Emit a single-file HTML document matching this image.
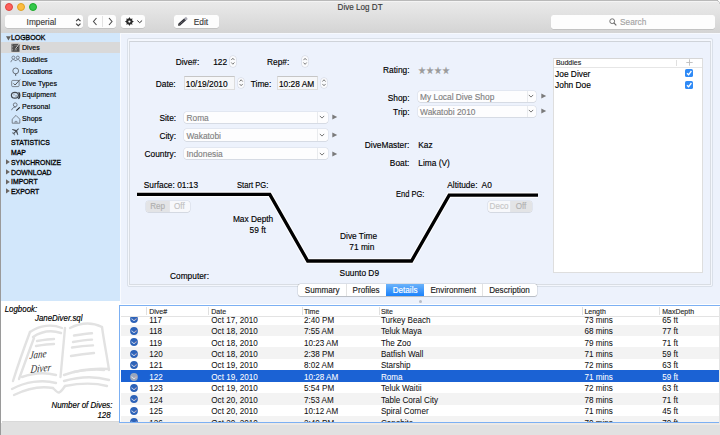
<!DOCTYPE html>
<html><head><meta charset="utf-8"><title>Dive Log DT</title>
<style>
html,body{margin:0;padding:0;width:720px;height:435px;overflow:hidden;background:#fff;}
body{position:relative;font-family:"Liberation Sans", sans-serif;}
div{box-sizing:border-box;-webkit-text-stroke:0.14px currentColor;}
</style></head><body>
<div style="position:absolute;left:0.00px;top:0.00px;width:720.00px;height:33.00px;background:linear-gradient(#ebebeb,#d4d4d4);"></div><div style="position:absolute;left:0.00px;top:0.00px;width:720.00px;height:1.00px;background:#b9b9b9;"></div><div style="position:absolute;left:1.00px;top:1.00px;width:717.00px;height:1.00px;background:#f4f4f4;"></div><div style="position:absolute;left:0.00px;top:0.00px;width:2.00px;height:2.00px;background:#fff;border-radius:0 0 2px 0;box-shadow:inset -0.6px -0.6px 0 #aaa;"></div><div style="position:absolute;left:718.00px;top:0.00px;width:2.00px;height:3.00px;background:#fff;"></div><svg style="position:absolute;left:716px;top:0" width="4" height="4" viewBox="0 0 4 4"><path d="M1 0.5 C2.2 0.7 3.3 1.8 3.6 3.5" fill="none" stroke="#b0b0b0" stroke-width="1"/></svg><div style="position:absolute;left:0.00px;top:32.50px;width:720.00px;height:0.50px;background:#c4c4c4;"></div><div style="position:absolute;left:5.00px;top:3.40px;width:8.00px;height:8.00px;border-radius:50%;background:#fc605c;border:0.5px solid #e0443e;"></div><div style="position:absolute;left:17.00px;top:3.40px;width:8.00px;height:8.00px;border-radius:50%;background:#fdbc40;border:0.5px solid #dea123;"></div><div style="position:absolute;left:29.00px;top:3.40px;width:8.00px;height:8.00px;border-radius:50%;background:#34c84a;border:0.5px solid #1aab29;"></div><div style="position:absolute;left:337.60px;top:4.49px;font-size:8.1px;line-height:8.1px;color:#383838;white-space:nowrap;transform:scale(1.0,1.12);transform-origin:0 6.86px;">Dive Log DT</div><div style="position:absolute;left:5.00px;top:15.00px;width:78.00px;height:13.00px;background:#fdfdfd;border-radius:2.5px;box-shadow:0 0.5px 0.5px rgba(0,0,0,0.18);"></div><div style="position:absolute;left:26.60px;top:18.22px;font-size:8.3px;line-height:8.3px;color:#3c3c3c;white-space:nowrap;transform:scale(1.0,1.12);transform-origin:0 7.03px;">Imperial</div><svg style="position:absolute;left:75px;top:17.5px" width="7" height="9" viewBox="0 0 7 9"><path d="M1.1 3.2 L3.3 1.1 L5.5 3.2 M1.1 5.6 L3.3 7.7 L5.5 5.6" fill="none" stroke="#3c3c3c" stroke-width="1.15"/></svg><div style="position:absolute;left:88.00px;top:15.00px;width:28.30px;height:13.00px;background:#fdfdfd;border-radius:2.5px;box-shadow:0 0.5px 0.5px rgba(0,0,0,0.18);"></div><div style="position:absolute;left:102.00px;top:16.00px;width:0.60px;height:11.00px;background:#e2e2e2;"></div><svg style="position:absolute;left:91px;top:17px" width="24" height="9" viewBox="0 0 24 9"><path d="M5.5 1 L2.5 4.5 L5.5 8" fill="none" stroke="#4a4a4a" stroke-width="1.1"/><path d="M18 1 L21 4.5 L18 8" fill="none" stroke="#4a4a4a" stroke-width="1.1"/></svg><div style="position:absolute;left:121.00px;top:15.00px;width:23.70px;height:13.00px;background:#fdfdfd;border-radius:2.5px;box-shadow:0 0.5px 0.5px rgba(0,0,0,0.18);"></div><svg style="position:absolute;left:124px;top:16px" width="20" height="11" viewBox="0 0 20 11"><path d="M5.40 1.10 L6.43 3.11 L8.58 2.42 L7.89 4.57 L9.90 5.60 L7.89 6.63 L8.58 8.78 L6.43 8.09 L5.40 10.10 L4.37 8.09 L2.22 8.78 L2.91 6.63 L0.90 5.60 L2.91 4.57 L2.22 2.42 L4.37 3.11Z" fill="#2a2a2a"/><circle cx="5.400000000000006" cy="5.60" r="3" fill="#2a2a2a"/><circle cx="5.400000000000006" cy="5.60" r="1.15" fill="#fff"/><path d="M13.3 4.5 L15.7 6.7 L18.1 4.5" fill="none" stroke="#333" stroke-width="1"/></svg><div style="position:absolute;left:174.00px;top:15.00px;width:45.00px;height:13.00px;background:#fdfdfd;border-radius:2.5px;box-shadow:0 0.5px 0.5px rgba(0,0,0,0.18);"></div><svg style="position:absolute;left:170px;top:12px" width="20" height="18" viewBox="0 0 20 18"><path d="M9.3 12.4 L15.2 7.3" stroke="#2e2e35" stroke-width="2.7"/><path d="M15.1 7.4 L16.9 5.9" stroke="#a9a9b4" stroke-width="2.7"/><path d="M9.8 12 L14.8 7.7" stroke="#d0d0d8" stroke-width="0.5" stroke-dasharray="1 0.8"/><path d="M8.2 13.7 L8.4 11.6 L10.3 13.4 Z" fill="#111"/></svg><div style="position:absolute;left:193.75px;top:18.22px;font-size:8.3px;line-height:8.3px;color:#3c3c3c;white-space:nowrap;transform:scale(1.0,1.12);transform-origin:0 7.03px;">Edit</div><div style="position:absolute;left:551.00px;top:15.00px;width:164.00px;height:13.50px;background:#fdfdfd;border-radius:2.5px;box-shadow:0 0.5px 0.5px rgba(0,0,0,0.18);"></div><svg style="position:absolute;left:609px;top:17.5px" width="8" height="8" viewBox="0 0 8 8"><circle cx="3.2" cy="3.2" r="2.4" fill="none" stroke="#6a6a6a" stroke-width="0.95"/><path d="M4.9 4.9 L7.3 7.3" stroke="#6a6a6a" stroke-width="1.2"/></svg><div style="position:absolute;left:620.00px;top:18.22px;font-size:8.3px;line-height:8.3px;color:#a3a3a3;white-space:nowrap;transform:scale(1.0,1.12);transform-origin:0 7.03px;">Search</div><div style="position:absolute;left:0.00px;top:33.00px;width:120.00px;height:268.80px;background:#d2e7fb;"></div><div style="position:absolute;left:0.00px;top:0.00px;width:1.00px;height:435.00px;background:#9a9a9a;"></div><div style="position:absolute;left:1.00px;top:42.20px;width:119.00px;height:11.30px;background:#d9d9d9;"></div><svg style="position:absolute;left:6px;top:35.6px" width="5" height="5" viewBox="0 0 5 5"><path d="M0 0.2H4.9L2.45 4.4Z" fill="#606060"/></svg><div style="position:absolute;left:11.00px;top:34.91px;font-size:6.9px;line-height:6.9px;color:#000;white-space:nowrap;transform:scale(1.0,1.12);transform-origin:0 5.84px;-webkit-text-stroke:0.28px #000;">LOGBOOK</div><div style="position:absolute;left:22.00px;top:44.84px;font-size:7.1px;line-height:7.1px;color:#000;white-space:nowrap;transform:scale(1.0,1.12);transform-origin:0 6.01px;-webkit-text-stroke:0.15px #000;">Dives</div><div style="position:absolute;left:22.00px;top:56.74px;font-size:7.1px;line-height:7.1px;color:#000;white-space:nowrap;transform:scale(1.0,1.12);transform-origin:0 6.01px;-webkit-text-stroke:0.15px #000;">Buddies</div><div style="position:absolute;left:22.00px;top:68.64px;font-size:7.1px;line-height:7.1px;color:#000;white-space:nowrap;transform:scale(1.0,1.12);transform-origin:0 6.01px;-webkit-text-stroke:0.15px #000;">Locations</div><div style="position:absolute;left:22.00px;top:80.54px;font-size:7.1px;line-height:7.1px;color:#000;white-space:nowrap;transform:scale(1.0,1.12);transform-origin:0 6.01px;-webkit-text-stroke:0.15px #000;">Dive Types</div><div style="position:absolute;left:22.00px;top:92.44px;font-size:7.1px;line-height:7.1px;color:#000;white-space:nowrap;transform:scale(1.0,1.12);transform-origin:0 6.01px;-webkit-text-stroke:0.15px #000;">Equipment</div><div style="position:absolute;left:22.00px;top:104.34px;font-size:7.1px;line-height:7.1px;color:#000;white-space:nowrap;transform:scale(1.0,1.12);transform-origin:0 6.01px;-webkit-text-stroke:0.15px #000;">Personal</div><div style="position:absolute;left:22.00px;top:116.24px;font-size:7.1px;line-height:7.1px;color:#000;white-space:nowrap;transform:scale(1.0,1.12);transform-origin:0 6.01px;-webkit-text-stroke:0.15px #000;">Shops</div><div style="position:absolute;left:22.00px;top:128.14px;font-size:7.1px;line-height:7.1px;color:#000;white-space:nowrap;transform:scale(1.0,1.12);transform-origin:0 6.01px;-webkit-text-stroke:0.15px #000;">Trips</div><div style="position:absolute;left:11.00px;top:140.21px;font-size:6.9px;line-height:6.9px;color:#000;white-space:nowrap;transform:scale(1.0,1.12);transform-origin:0 5.84px;-webkit-text-stroke:0.28px #000;">STATISTICS</div><div style="position:absolute;left:11.00px;top:150.11px;font-size:6.9px;line-height:6.9px;color:#000;white-space:nowrap;transform:scale(1.0,1.12);transform-origin:0 5.84px;-webkit-text-stroke:0.28px #000;">MAP</div><div style="position:absolute;left:11.00px;top:159.71px;font-size:6.9px;line-height:6.9px;color:#000;white-space:nowrap;transform:scale(1.0,1.12);transform-origin:0 5.84px;-webkit-text-stroke:0.28px #000;">SYNCHRONIZE</div><div style="position:absolute;left:11.00px;top:169.61px;font-size:6.9px;line-height:6.9px;color:#000;white-space:nowrap;transform:scale(1.0,1.12);transform-origin:0 5.84px;-webkit-text-stroke:0.28px #000;">DOWNLOAD</div><div style="position:absolute;left:11.00px;top:178.81px;font-size:6.9px;line-height:6.9px;color:#000;white-space:nowrap;transform:scale(1.0,1.12);transform-origin:0 5.84px;-webkit-text-stroke:0.28px #000;">IMPORT</div><div style="position:absolute;left:11.00px;top:188.51px;font-size:6.9px;line-height:6.9px;color:#000;white-space:nowrap;transform:scale(1.0,1.12);transform-origin:0 5.84px;-webkit-text-stroke:0.28px #000;">EXPORT</div><svg style="position:absolute;left:6.4px;top:159.4px" width="4" height="6" viewBox="0 0 4 6"><path d="M0 0.3V5.5L3.8 2.9Z" fill="#6b6663"/></svg><svg style="position:absolute;left:6.4px;top:169.3px" width="4" height="6" viewBox="0 0 4 6"><path d="M0 0.3V5.5L3.8 2.9Z" fill="#6b6663"/></svg><svg style="position:absolute;left:6.4px;top:178.5px" width="4" height="6" viewBox="0 0 4 6"><path d="M0 0.3V5.5L3.8 2.9Z" fill="#6b6663"/></svg><svg style="position:absolute;left:6.4px;top:188.2px" width="4" height="6" viewBox="0 0 4 6"><path d="M0 0.3V5.5L3.8 2.9Z" fill="#6b6663"/></svg><svg style="position:absolute;left:0;top:0" width="120" height="140" viewBox="0 0 120 140"><rect x="11.5" y="43.8" width="8" height="8" fill="#4d4d4d"/><path d="M12.6 44.5V51.2" stroke="#cfcfcf" stroke-width="0.7" stroke-dasharray="0.8 0.7"/><path d="M14.2 45.3H17.5M14.2 50.2H17" stroke="#9a9a9a" stroke-width="0.5"/><path d="M19.8 43.8 L15.6 49.6" stroke="#e8e8e8" stroke-width="1.5"/><path d="M19.6 44.6 L16 49.6" stroke="#111" stroke-width="0.9"/><g fill="none" stroke="#5f6670" stroke-width="0.75"><circle cx="13.4" cy="57.6" r="1.5"/><circle cx="17.8" cy="57.6" r="1.5"/><path d="M10.9 62.2 C11.2 60.2 12.2 59.6 13.4 59.6 C14.6 59.6 15.4 60.2 15.7 61"/><path d="M15.5 61 C15.8 60.2 16.6 59.6 17.8 59.6 C19 59.6 20 60.2 20.3 62.2"/></g><circle cx="15.7" cy="70.9" r="2.9" fill="none" stroke="#5d636b" stroke-width="0.9"/><path d="M15.7 73.8 V75.8" stroke="#4d535b" stroke-width="1"/><rect x="11.7" y="80.4" width="7.4" height="6.2" rx="1" fill="none" stroke="#6d737b" stroke-width="0.85"/><path d="M13.5 83.4 L15.1 85 L20 79.6" fill="none" stroke="#444" stroke-width="0.9"/><ellipse cx="14.9" cy="95.3" rx="3.5" ry="2.9" fill="none" stroke="#43484f" stroke-width="1.2"/><circle cx="13.9" cy="94.6" r="1.1" fill="#b8bec6"/><circle cx="16.1" cy="95.9" r="0.9" fill="#9aa0a8"/><path d="M18.6 92.3 C20.3 93.6 20.2 97 18.4 98.9" fill="none" stroke="#33373d" stroke-width="1.3"/><g fill="none" stroke="#5a6068" stroke-width="0.8"><circle cx="15.2" cy="104.8" r="1.9"/><path d="M11.6 110.2 C12.2 107.7 14 107.2 15.6 107.3"/></g><path d="M16.3 110.6 L19.8 107.4" stroke="#222" stroke-width="1.2"/><path d="M12.2 119.2 L16 115.4 L19.8 119.2 V123.2 H12.2 Z" fill="none" stroke="#6a7078" stroke-width="0.85" stroke-linejoin="round"/><path d="M15 123 V121.4 H17 V123" fill="none" stroke="#6a7078" stroke-width="0.7"/><g transform="translate(16 131.3) rotate(45) translate(-4.2 -4.2) scale(0.84)"><path d="M4.4 0.3 C4.8 0.3 5.6 0.3 5.6 1.4 V3.6 L9.8 6 V7 L5.6 5.6 V8.2 L7 9.2 V9.9 L5 9.3 L3 9.9 V9.2 L4.4 8.2 V5.6 L0.2 7 V6 L4.4 3.6 V1.4 C4.4 0.3 4.4 0.3 4.4 0.3Z" fill="#474c53"/></g></svg><div style="position:absolute;left:120.00px;top:33.00px;width:600.00px;height:271.00px;background:#edf2fc;"></div><div style="position:absolute;left:120.00px;top:33.00px;width:1.20px;height:271.00px;background:#f9fbff;"></div><div style="position:absolute;left:120.00px;top:33.00px;width:600.00px;height:1.00px;background:#f6f9fe;"></div><div style="position:absolute;left:126.80px;top:38.20px;width:586.60px;height:249.00px;border:1px solid #dae0e9;border-radius:2px;background:#f4f7fd;"></div><div style="position:absolute;left:128.80px;top:40.80px;width:582.40px;height:244.40px;border:1px solid #d9dde3;border-top-color:#cfd3d9;background:#edf2fc;"></div><div style="position:absolute;right:520.70px;top:57.98px;font-size:8.35px;line-height:8.35px;color:#000;white-space:nowrap;transform:scale(1.0,1.12);transform-origin:100% 7.07px;">Dive#:</div><div style="position:absolute;left:213.20px;top:57.98px;font-size:8.35px;line-height:8.35px;color:#000;white-space:nowrap;transform:scale(1.0,1.12);transform-origin:0 7.07px;">122</div><div style="position:absolute;left:229.90px;top:56.30px;width:5.70px;height:10.50px;background:#fafbfd;border-radius:3px;box-shadow:0 0 0 0.5px rgba(0,0,0,0.12);"></div><svg style="position:absolute;left:229.90px;top:56.30px" width="5.70" height="10.50" viewBox="0 0 5.70 10.50"><path d="M1.25 4.05 L2.85 2.25 L4.45 4.05 M1.25 6.45 L2.85 8.25 L4.45 6.45" fill="none" stroke="#6e6e6e" stroke-width="0.9"/></svg><div style="position:absolute;right:430.70px;top:57.98px;font-size:8.35px;line-height:8.35px;color:#000;white-space:nowrap;transform:scale(1.0,1.12);transform-origin:100% 7.07px;">Rep#:</div><div style="position:absolute;left:301.60px;top:56.30px;width:6.20px;height:10.70px;background:#fafbfd;border-radius:3px;box-shadow:0 0 0 0.5px rgba(0,0,0,0.12);"></div><svg style="position:absolute;left:301.60px;top:56.30px" width="6.20" height="10.70" viewBox="0 0 6.20 10.70"><path d="M1.50 4.15 L3.10 2.35 L4.70 4.15 M1.50 6.55 L3.10 8.35 L4.70 6.55" fill="none" stroke="#6e6e6e" stroke-width="0.9"/></svg><div style="position:absolute;right:544.30px;top:79.78px;font-size:8.35px;line-height:8.35px;color:#000;white-space:nowrap;transform:scale(1.0,1.12);transform-origin:100% 7.07px;">Date:</div><div style="position:absolute;left:184.00px;top:76.10px;width:50.70px;height:14.20px;background:#f6f7f9;border:1px solid #dddddd;border-top-color:#c6c6c6;"></div><div style="position:absolute;left:185.80px;top:79.78px;font-size:8.35px;line-height:8.35px;color:#000;white-space:nowrap;transform:scale(1.0,1.12);transform-origin:0 7.07px;">10/19/2010</div><div style="position:absolute;left:237.50px;top:78.40px;width:6.30px;height:9.50px;background:#fafbfd;border-radius:3px;box-shadow:0 0 0 0.5px rgba(0,0,0,0.12);"></div><svg style="position:absolute;left:237.50px;top:78.40px" width="6.30" height="9.50" viewBox="0 0 6.30 9.50"><path d="M1.55 3.55 L3.15 1.75 L4.75 3.55 M1.55 5.95 L3.15 7.75 L4.75 5.95" fill="none" stroke="#6e6e6e" stroke-width="0.9"/></svg><div style="position:absolute;right:448.70px;top:79.78px;font-size:8.35px;line-height:8.35px;color:#000;white-space:nowrap;transform:scale(1.0,1.12);transform-origin:100% 7.07px;">Time:</div><div style="position:absolute;left:276.80px;top:76.10px;width:41.00px;height:14.20px;background:#f6f7f9;border:1px solid #dddddd;border-top-color:#c6c6c6;"></div><div style="position:absolute;left:278.90px;top:79.78px;font-size:8.35px;line-height:8.35px;color:#000;white-space:nowrap;transform:scale(1.0,1.12);transform-origin:0 7.07px;">10:28 AM</div><div style="position:absolute;left:321.20px;top:78.40px;width:6.00px;height:9.50px;background:#fafbfd;border-radius:3px;box-shadow:0 0 0 0.5px rgba(0,0,0,0.12);"></div><svg style="position:absolute;left:321.20px;top:78.40px" width="6.00" height="9.50" viewBox="0 0 6.00 9.50"><path d="M1.40 3.55 L3.00 1.75 L4.60 3.55 M1.40 5.95 L3.00 7.75 L4.60 5.95" fill="none" stroke="#6e6e6e" stroke-width="0.9"/></svg><div style="position:absolute;right:543.90px;top:113.98px;font-size:8.35px;line-height:8.35px;color:#000;white-space:nowrap;transform:scale(1.0,1.12);transform-origin:100% 7.07px;">Site:</div><div style="position:absolute;right:543.90px;top:132.13px;font-size:8.35px;line-height:8.35px;color:#000;white-space:nowrap;transform:scale(1.0,1.12);transform-origin:100% 7.07px;">City:</div><div style="position:absolute;right:543.90px;top:149.78px;font-size:8.35px;line-height:8.35px;color:#000;white-space:nowrap;transform:scale(1.0,1.12);transform-origin:100% 7.07px;">Country:</div><div style="position:absolute;left:184.20px;top:111.50px;width:143.40px;height:11.50px;background:#fdfdfe;border-radius:2.5px;box-shadow:0 0 0 0.5px rgba(0,0,0,0.09),0 0.6px 0.6px rgba(0,0,0,0.10);"></div><div style="position:absolute;left:317.20px;top:111.50px;width:0.60px;height:11.50px;background:#e9ebee;"></div><svg style="position:absolute;left:319.40px;top:115.25px" width="6" height="4" viewBox="0 0 6 4"><path d="M0.8 0.9 L3 3.1 L5.2 0.9" fill="none" stroke="#6f6f6f" stroke-width="0.95"/></svg><div style="position:absolute;left:186.50px;top:113.78px;font-size:8.35px;line-height:8.35px;color:#828282;white-space:nowrap;transform:scale(1.0,1.12);transform-origin:0 7.07px;">Roma</div><svg style="position:absolute;left:332.00px;top:114.25px" width="6" height="6" viewBox="0 0 6 6"><path d="M0.3 0.5 L5.2 3 L0.3 5.5Z" fill="#7a7a7a"/></svg><div style="position:absolute;left:184.20px;top:129.30px;width:143.40px;height:11.50px;background:#fdfdfe;border-radius:2.5px;box-shadow:0 0 0 0.5px rgba(0,0,0,0.09),0 0.6px 0.6px rgba(0,0,0,0.10);"></div><div style="position:absolute;left:317.20px;top:129.30px;width:0.60px;height:11.50px;background:#e9ebee;"></div><svg style="position:absolute;left:319.40px;top:133.05px" width="6" height="4" viewBox="0 0 6 4"><path d="M0.8 0.9 L3 3.1 L5.2 0.9" fill="none" stroke="#6f6f6f" stroke-width="0.95"/></svg><div style="position:absolute;left:186.50px;top:131.58px;font-size:8.35px;line-height:8.35px;color:#828282;white-space:nowrap;transform:scale(1.0,1.12);transform-origin:0 7.07px;">Wakatobi</div><svg style="position:absolute;left:332.00px;top:132.05px" width="6" height="6" viewBox="0 0 6 6"><path d="M0.3 0.5 L5.2 3 L0.3 5.5Z" fill="#7a7a7a"/></svg><div style="position:absolute;left:184.20px;top:147.80px;width:143.40px;height:11.50px;background:#fdfdfe;border-radius:2.5px;box-shadow:0 0 0 0.5px rgba(0,0,0,0.09),0 0.6px 0.6px rgba(0,0,0,0.10);"></div><div style="position:absolute;left:317.20px;top:147.80px;width:0.60px;height:11.50px;background:#e9ebee;"></div><svg style="position:absolute;left:319.40px;top:151.55px" width="6" height="4" viewBox="0 0 6 4"><path d="M0.8 0.9 L3 3.1 L5.2 0.9" fill="none" stroke="#6f6f6f" stroke-width="0.95"/></svg><div style="position:absolute;left:186.50px;top:150.08px;font-size:8.35px;line-height:8.35px;color:#828282;white-space:nowrap;transform:scale(1.0,1.12);transform-origin:0 7.07px;">Indonesia</div><svg style="position:absolute;left:332.00px;top:150.55px" width="6" height="6" viewBox="0 0 6 6"><path d="M0.3 0.5 L5.2 3 L0.3 5.5Z" fill="#7a7a7a"/></svg><div style="position:absolute;right:310.50px;top:66.38px;font-size:8.35px;line-height:8.35px;color:#000;white-space:nowrap;transform:scale(1.0,1.12);transform-origin:100% 7.07px;">Rating:</div><div style="position:absolute;left:418.30px;top:67.11px;font-size:8.9px;line-height:8.9px;color:#9b9b9b;white-space:nowrap;transform:scale(1.0,1.12);transform-origin:0 7.54px;letter-spacing:-0.1px;">&#9733;&#9733;&#9733;&#9733;</div><div style="position:absolute;right:310.50px;top:93.78px;font-size:8.35px;line-height:8.35px;color:#000;white-space:nowrap;transform:scale(1.0,1.12);transform-origin:100% 7.07px;">Shop:</div><div style="position:absolute;right:310.50px;top:107.98px;font-size:8.35px;line-height:8.35px;color:#000;white-space:nowrap;transform:scale(1.0,1.12);transform-origin:100% 7.07px;">Trip:</div><div style="position:absolute;left:417.80px;top:90.80px;width:118.20px;height:11.30px;background:#fdfdfe;border-radius:2.5px;box-shadow:0 0 0 0.5px rgba(0,0,0,0.09),0 0.6px 0.6px rgba(0,0,0,0.10);"></div><div style="position:absolute;left:526.50px;top:90.80px;width:0.60px;height:11.30px;background:#e9ebee;"></div><svg style="position:absolute;left:528.25px;top:94.45px" width="6" height="4" viewBox="0 0 6 4"><path d="M0.8 0.9 L3 3.1 L5.2 0.9" fill="none" stroke="#6f6f6f" stroke-width="0.95"/></svg><div style="position:absolute;left:420.10px;top:93.08px;font-size:8.35px;line-height:8.35px;color:#828282;white-space:nowrap;transform:scale(1.0,1.12);transform-origin:0 7.07px;">My Local Dive Shop</div><svg style="position:absolute;left:541.00px;top:93.45px" width="6" height="6" viewBox="0 0 6 6"><path d="M0.3 0.5 L5.2 3 L0.3 5.5Z" fill="#7a7a7a"/></svg><div style="position:absolute;left:417.80px;top:105.60px;width:118.20px;height:11.40px;background:#fdfdfe;border-radius:2.5px;box-shadow:0 0 0 0.5px rgba(0,0,0,0.09),0 0.6px 0.6px rgba(0,0,0,0.10);"></div><div style="position:absolute;left:526.50px;top:105.60px;width:0.60px;height:11.40px;background:#e9ebee;"></div><svg style="position:absolute;left:528.25px;top:109.30px" width="6" height="4" viewBox="0 0 6 4"><path d="M0.8 0.9 L3 3.1 L5.2 0.9" fill="none" stroke="#6f6f6f" stroke-width="0.95"/></svg><div style="position:absolute;left:420.10px;top:107.88px;font-size:8.35px;line-height:8.35px;color:#828282;white-space:nowrap;transform:scale(1.0,1.12);transform-origin:0 7.07px;">Wakatobi 2010</div><svg style="position:absolute;left:541.00px;top:108.30px" width="6" height="6" viewBox="0 0 6 6"><path d="M0.3 0.5 L5.2 3 L0.3 5.5Z" fill="#7a7a7a"/></svg><div style="position:absolute;right:310.70px;top:141.18px;font-size:8.35px;line-height:8.35px;color:#000;white-space:nowrap;transform:scale(1.0,1.12);transform-origin:100% 7.07px;">DiveMaster:</div><div style="position:absolute;left:418.30px;top:140.98px;font-size:8.35px;line-height:8.35px;color:#000;white-space:nowrap;transform:scale(1.0,1.12);transform-origin:0 7.07px;">Kaz</div><div style="position:absolute;right:310.70px;top:159.18px;font-size:8.35px;line-height:8.35px;color:#000;white-space:nowrap;transform:scale(1.0,1.12);transform-origin:100% 7.07px;">Boat:</div><div style="position:absolute;left:418.30px;top:159.18px;font-size:8.35px;line-height:8.35px;color:#000;white-space:nowrap;transform:scale(1.0,1.12);transform-origin:0 7.07px;">Lima (V)</div><div style="position:absolute;left:552.50px;top:57.50px;width:150.00px;height:215.00px;background:#fff;border:1px solid #dedede;border-top-color:#d6d6d6;"></div><div style="position:absolute;left:553.50px;top:66.60px;width:148.00px;height:0.80px;background:#e6e6e6;"></div><div style="position:absolute;left:675.50px;top:59.50px;width:0.60px;height:6.00px;background:#e0e0e0;"></div><div style="position:absolute;left:555.90px;top:59.22px;font-size:7px;line-height:7px;color:#2a2a2a;white-space:nowrap;transform:scale(1.0,1.12);transform-origin:0 5.93px;">Buddies</div><svg style="position:absolute;left:685.5px;top:58.5px" width="7" height="7" viewBox="0 0 7 7"><path d="M3.5 0.3V6.7M0.3 3.5H6.7" stroke="#bdbdbd" stroke-width="0.9"/></svg><div style="position:absolute;left:555.10px;top:69.78px;font-size:8.35px;line-height:8.35px;color:#000;white-space:nowrap;transform:scale(1.0,1.12);transform-origin:0 7.07px;">Joe Diver</div><div style="position:absolute;left:555.10px;top:81.08px;font-size:8.35px;line-height:8.35px;color:#000;white-space:nowrap;transform:scale(1.0,1.12);transform-origin:0 7.07px;">John Doe</div><div style="position:absolute;left:684.70px;top:69.30px;width:8.30px;height:8.00px;background:#2f8af6;border-radius:1.6px;"></div><svg style="position:absolute;left:684.7px;top:69.3px" width="8.3" height="8" viewBox="0 0 8.3 8"><path d="M2 4.2 L3.6 5.8 L6.4 2" fill="none" stroke="#fff" stroke-width="1.3"/></svg><div style="position:absolute;left:684.70px;top:80.50px;width:8.30px;height:8.00px;background:#2f8af6;border-radius:1.6px;"></div><svg style="position:absolute;left:684.7px;top:80.5px" width="8.3" height="8" viewBox="0 0 8.3 8"><path d="M2 4.2 L3.6 5.8 L6.4 2" fill="none" stroke="#fff" stroke-width="1.3"/></svg><svg style="position:absolute;left:0;top:0" width="720" height="435" viewBox="0 0 720 435"><path d="M137 194.4 L269.8 194.4 L307.7 261 L411.5 261 L449.2 195.1 L538 195.1" fill="none" stroke="#fff" stroke-opacity="0.85" stroke-width="5.6" stroke-linejoin="miter"/><path d="M137 194.4 L269.8 194.4 L307.7 261 L411.5 261 L449.2 195.1 L538 195.1" fill="none" stroke="#000" stroke-width="3.3" stroke-linejoin="miter"/></svg><div style="position:absolute;left:143.75px;top:180.88px;font-size:8.35px;line-height:8.35px;color:#000;white-space:nowrap;transform:scale(1.0,1.12);transform-origin:0 7.07px;">Surface: 01:13</div><div style="position:absolute;left:237.10px;top:180.88px;font-size:8.35px;line-height:8.35px;color:#000;white-space:nowrap;transform:scale(0.915,1.12);transform-origin:0 7.07px;">Start PG:</div><div style="position:absolute;left:232.90px;top:215.18px;font-size:8.35px;line-height:8.35px;color:#000;white-space:nowrap;transform:scale(1.0,1.12);transform-origin:0 7.07px;">Max Depth</div><div style="position:absolute;left:249.60px;top:226.08px;font-size:8.35px;line-height:8.35px;color:#000;white-space:nowrap;transform:scale(1.0,1.12);transform-origin:0 7.07px;">59 ft</div><div style="position:absolute;left:340.00px;top:231.78px;font-size:8.35px;line-height:8.35px;color:#000;white-space:nowrap;transform:scale(1.0,1.12);transform-origin:0 7.07px;">Dive Time</div><div style="position:absolute;left:349.30px;top:243.38px;font-size:8.35px;line-height:8.35px;color:#000;white-space:nowrap;transform:scale(1.0,1.12);transform-origin:0 7.07px;">71 min</div><div style="position:absolute;left:339.60px;top:268.98px;font-size:8.35px;line-height:8.35px;color:#000;white-space:nowrap;transform:scale(1.0,1.12);transform-origin:0 7.07px;">Suunto D9</div><div style="position:absolute;left:395.80px;top:189.88px;font-size:8.35px;line-height:8.35px;color:#000;white-space:nowrap;transform:scale(0.9,1.12);transform-origin:0 7.07px;">End PG:</div><div style="position:absolute;left:447.30px;top:181.08px;font-size:8.35px;line-height:8.35px;color:#000;white-space:nowrap;transform:scale(1.0,1.12);transform-origin:0 7.07px;">Altitude:&nbsp; A0</div><div style="position:absolute;left:170.00px;top:272.08px;font-size:8.35px;line-height:8.35px;color:#000;white-space:nowrap;transform:scale(1.0,1.12);transform-origin:0 7.07px;">Computer:</div><div style="position:absolute;left:146.40px;top:200.70px;width:43.50px;height:11.60px;background:#f7f8fb;border-radius:2.5px;box-shadow:0 0 0 0.5px rgba(0,0,0,0.10),0 0.5px 0.5px rgba(0,0,0,0.10);"></div><div style="position:absolute;left:146.40px;top:200.70px;width:22.40px;height:11.60px;background:#e3e4e6;border-radius:2.5px 0 0 2.5px;"></div><div style="position:absolute;left:168.80px;top:200.70px;width:0.50px;height:11.60px;background:#e4e6ea;"></div><div style="position:absolute;left:157.60px;top:203.29px;font-size:8.1px;line-height:8.1px;color:#b0b0b0;white-space:nowrap;transform:translateX(-50%) scale(1.0,1.12);transform-origin:50% 6.86px;">Rep</div><div style="position:absolute;left:179.35px;top:203.29px;font-size:8.1px;line-height:8.1px;color:#c2c2c2;white-space:nowrap;transform:translateX(-50%) scale(1.0,1.12);transform-origin:50% 6.86px;">Off</div><div style="position:absolute;left:488.00px;top:200.50px;width:44.00px;height:11.70px;background:#f7f8fb;border-radius:2.5px;box-shadow:0 0 0 0.5px rgba(0,0,0,0.10),0 0.5px 0.5px rgba(0,0,0,0.10);"></div><div style="position:absolute;left:510.00px;top:200.50px;width:22.00px;height:11.70px;background:#e3e4e6;border-radius:0 2.5px 2.5px 0;"></div><div style="position:absolute;left:510.00px;top:200.50px;width:0.50px;height:11.70px;background:#e4e6ea;"></div><div style="position:absolute;left:499.00px;top:203.09px;font-size:8.1px;line-height:8.1px;color:#c6c6c6;white-space:nowrap;transform:translateX(-50%) scale(1.0,1.12);transform-origin:50% 6.86px;">Deco</div><div style="position:absolute;left:521.00px;top:203.09px;font-size:8.1px;line-height:8.1px;color:#b2b2b2;white-space:nowrap;transform:translateX(-50%) scale(1.0,1.12);transform-origin:50% 6.86px;">Off</div><div style="position:absolute;left:298.00px;top:284.20px;width:239.00px;height:11.80px;background:#fff;border-radius:2.5px;box-shadow:0 0 0 0.5px rgba(0,0,0,0.14),0 0.7px 0.7px rgba(0,0,0,0.16);"></div><div style="position:absolute;left:385.90px;top:284.20px;width:38.50px;height:11.80px;background:linear-gradient(#6cb3fa,#1a82fb);"></div><div style="position:absolute;left:346.30px;top:284.20px;width:0.60px;height:11.80px;background:#e2e2e2;"></div><div style="position:absolute;left:482.00px;top:284.20px;width:0.60px;height:11.80px;background:#e2e2e2;"></div><div style="position:absolute;left:322.15px;top:286.79px;font-size:8.1px;line-height:8.1px;color:#222;white-space:nowrap;transform:translateX(-50%) scale(1.0,1.12);transform-origin:50% 6.86px;">Summary</div><div style="position:absolute;left:366.10px;top:286.79px;font-size:8.1px;line-height:8.1px;color:#222;white-space:nowrap;transform:translateX(-50%) scale(1.0,1.12);transform-origin:50% 6.86px;">Profiles</div><div style="position:absolute;left:405.15px;top:286.79px;font-size:8.1px;line-height:8.1px;color:#fff;white-space:nowrap;transform:translateX(-50%) scale(1.0,1.12);transform-origin:50% 6.86px;">Details</div><div style="position:absolute;left:453.20px;top:286.79px;font-size:8.1px;line-height:8.1px;color:#222;white-space:nowrap;transform:translateX(-50%) scale(1.0,1.12);transform-origin:50% 6.86px;">Environment</div><div style="position:absolute;left:509.50px;top:286.79px;font-size:8.1px;line-height:8.1px;color:#222;white-space:nowrap;transform:translateX(-50%) scale(1.0,1.12);transform-origin:50% 6.86px;">Description</div><div style="position:absolute;left:418.50px;top:299.80px;width:3.00px;height:3.00px;border-radius:50%;background:#b7bcc6;"></div><div style="position:absolute;left:1.00px;top:301.00px;width:119.00px;height:122.40px;background:#fff;"></div><div style="position:absolute;left:4.70px;top:306.46px;font-size:7.9px;line-height:7.9px;color:#000;white-space:nowrap;font-style:italic;transform:scale(1.0,1.12);transform-origin:0 6.69px;-webkit-text-stroke:0.15px #000;">Logbook:</div><div style="position:absolute;left:35.00px;top:315.06px;font-size:7.9px;line-height:7.9px;color:#000;white-space:nowrap;font-style:italic;transform:scale(1.0,1.12);transform-origin:0 6.69px;-webkit-text-stroke:0.15px #000;">JaneDiver.sql</div><svg style="position:absolute;left:0;top:0" width="120" height="435" viewBox="0 0 120 435"><g fill="none" stroke="#e2e2e2" stroke-width="2.4" stroke-linecap="round" stroke-linejoin="round">
<path d="M30 332 C40 325 52 324 62 328"/>
<path d="M33 337 C42 331 52 330 61 333"/>
<path d="M30 332 C24 348 18 365 13 381"/>
<path d="M34 338 C28 354 23 368 19 379"/>
<path d="M65 328 L60.5 377"/>
<path d="M70 328 C80 323 92 322 102 327"/>
<path d="M102 327 C104 342 107 356 109 370"/>
<path d="M37 341 C43 340 49 339 54 339"/>
<path d="M36 346 C42 345 48 344 54 344"/>
<path d="M74 335.5 C80 334.5 86 333.5 92 333.2"/>
<path d="M73 342 C79 341 86 340 92 339.6"/>
<path d="M72 347.5 C79 346.5 86 345.8 93 345.4"/>
<path d="M71 356 C79 354.5 87 353.5 94 353"/>
<path d="M22 377 C33 373 45 372 56 375"/>
<path d="M12 389 C25 382 42 379 56 383"/>
<path d="M14 395 C28 388 42 386 53 388"/>
<path d="M53 388 C56 391 57.5 393 59 392.5 C61 392 63 389 65 386"/>
<path d="M64 375 C78 370 95 368 109 369"/>
<path d="M64 381 C78 377 95 376 109 380"/>
<path d="M65 386 C80 383 96 383 107 386"/>
<path d="M74 372 C85 370 96 369 104 370"/>
</g></svg><div style="position:absolute;left:28.80px;top:349.74px;font-size:11px;line-height:11px;color:#2b2b2b;white-space:nowrap;font-style:italic;font-family:'Liberation Serif', serif;-webkit-text-stroke:0;transform:rotate(-6deg) skewX(-12deg) scaleX(0.82);transform-origin:0 100%;">Jane</div><div style="position:absolute;left:29.80px;top:363.54px;font-size:11px;line-height:11px;color:#2b2b2b;white-space:nowrap;font-style:italic;font-family:'Liberation Serif', serif;-webkit-text-stroke:0;transform:rotate(-6deg) skewX(-12deg) scaleX(0.82);transform-origin:0 100%;">Diver</div><div style="position:absolute;right:607.60px;top:401.76px;font-size:7.9px;line-height:7.9px;color:#000;white-space:nowrap;font-style:italic;transform:scale(1.0,1.12);transform-origin:100% 6.69px;-webkit-text-stroke:0.15px #000;">Number of Dives:</div><div style="position:absolute;right:609.40px;top:412.16px;font-size:7.9px;line-height:7.9px;color:#000;white-space:nowrap;font-style:italic;transform:scale(1.0,1.12);transform-origin:100% 6.69px;-webkit-text-stroke:0.15px #000;">128</div><div style="position:absolute;left:120.00px;top:304.50px;width:600.00px;height:118.90px;background:#fff;"></div><div style="position:absolute;left:121px;top:306px;width:598px;height:116.5px;overflow:hidden;"><div style="position:absolute;left:0;top:7.20px;width:598px;height:11.5px;background:#fff;"></div><div style="position:absolute;left:28.20px;top:10.64px;font-size:8.1px;line-height:8.1px;color:#111;white-space:nowrap;-webkit-text-stroke:0.05px #111;transform:scaleY(1.12);transform-origin:0 6.86px;">117</div><div style="position:absolute;left:90.30px;top:10.64px;font-size:8.1px;line-height:8.1px;color:#111;white-space:nowrap;-webkit-text-stroke:0.05px #111;transform:scaleY(1.12);transform-origin:0 6.86px;">Oct 17, 2010</div><div style="position:absolute;left:183.00px;top:10.64px;font-size:8.1px;line-height:8.1px;color:#111;white-space:nowrap;-webkit-text-stroke:0.05px #111;transform:scaleY(1.12);transform-origin:0 6.86px;">2:40 PM</div><div style="position:absolute;left:259.90px;top:10.64px;font-size:8.1px;line-height:8.1px;color:#111;white-space:nowrap;-webkit-text-stroke:0.05px #111;transform:scaleY(1.12);transform-origin:0 6.86px;">Turkey Beach</div><div style="position:absolute;left:463.40px;top:10.64px;font-size:8.1px;line-height:8.1px;color:#111;white-space:nowrap;-webkit-text-stroke:0.05px #111;transform:scaleY(1.12);transform-origin:0 6.86px;">73 mins</div><div style="position:absolute;left:541.20px;top:10.64px;font-size:8.1px;line-height:8.1px;color:#111;white-space:nowrap;-webkit-text-stroke:0.05px #111;transform:scaleY(1.12);transform-origin:0 6.86px;">65 ft</div><svg style="position:absolute;left:9.20px;top:9.40px" width="8" height="8" viewBox="0 0 8 8"><circle cx="4" cy="4" r="3.9" fill="#2c62b8"/><path d="M1.8 3.6 C2.6 6 5.4 6 6.2 3.6" fill="none" stroke="#fff" stroke-width="0.9"/><path d="M5.3 4.6 L6.3 3.6" stroke="#d06060" stroke-width="0.7"/></svg><div style="position:absolute;left:0;top:18.63px;width:598px;height:11.5px;background:#f3f3f3;"></div><div style="position:absolute;left:28.20px;top:22.07px;font-size:8.1px;line-height:8.1px;color:#111;white-space:nowrap;-webkit-text-stroke:0.05px #111;transform:scaleY(1.12);transform-origin:0 6.86px;">118</div><div style="position:absolute;left:90.30px;top:22.07px;font-size:8.1px;line-height:8.1px;color:#111;white-space:nowrap;-webkit-text-stroke:0.05px #111;transform:scaleY(1.12);transform-origin:0 6.86px;">Oct 18, 2010</div><div style="position:absolute;left:183.00px;top:22.07px;font-size:8.1px;line-height:8.1px;color:#111;white-space:nowrap;-webkit-text-stroke:0.05px #111;transform:scaleY(1.12);transform-origin:0 6.86px;">7:55 AM</div><div style="position:absolute;left:259.90px;top:22.07px;font-size:8.1px;line-height:8.1px;color:#111;white-space:nowrap;-webkit-text-stroke:0.05px #111;transform:scaleY(1.12);transform-origin:0 6.86px;">Teluk Maya</div><div style="position:absolute;left:463.40px;top:22.07px;font-size:8.1px;line-height:8.1px;color:#111;white-space:nowrap;-webkit-text-stroke:0.05px #111;transform:scaleY(1.12);transform-origin:0 6.86px;">68 mins</div><div style="position:absolute;left:541.20px;top:22.07px;font-size:8.1px;line-height:8.1px;color:#111;white-space:nowrap;-webkit-text-stroke:0.05px #111;transform:scaleY(1.12);transform-origin:0 6.86px;">77 ft</div><svg style="position:absolute;left:9.20px;top:20.83px" width="8" height="8" viewBox="0 0 8 8"><circle cx="4" cy="4" r="3.9" fill="#2c62b8"/><path d="M1.8 3.6 C2.6 6 5.4 6 6.2 3.6" fill="none" stroke="#fff" stroke-width="0.9"/><path d="M5.3 4.6 L6.3 3.6" stroke="#d06060" stroke-width="0.7"/></svg><div style="position:absolute;left:0;top:30.06px;width:598px;height:11.5px;background:#fff;"></div><div style="position:absolute;left:28.20px;top:33.50px;font-size:8.1px;line-height:8.1px;color:#111;white-space:nowrap;-webkit-text-stroke:0.05px #111;transform:scaleY(1.12);transform-origin:0 6.86px;">119</div><div style="position:absolute;left:90.30px;top:33.50px;font-size:8.1px;line-height:8.1px;color:#111;white-space:nowrap;-webkit-text-stroke:0.05px #111;transform:scaleY(1.12);transform-origin:0 6.86px;">Oct 18, 2010</div><div style="position:absolute;left:183.00px;top:33.50px;font-size:8.1px;line-height:8.1px;color:#111;white-space:nowrap;-webkit-text-stroke:0.05px #111;transform:scaleY(1.12);transform-origin:0 6.86px;">10:23 AM</div><div style="position:absolute;left:259.90px;top:33.50px;font-size:8.1px;line-height:8.1px;color:#111;white-space:nowrap;-webkit-text-stroke:0.05px #111;transform:scaleY(1.12);transform-origin:0 6.86px;">The Zoo</div><div style="position:absolute;left:463.40px;top:33.50px;font-size:8.1px;line-height:8.1px;color:#111;white-space:nowrap;-webkit-text-stroke:0.05px #111;transform:scaleY(1.12);transform-origin:0 6.86px;">79 mins</div><div style="position:absolute;left:541.20px;top:33.50px;font-size:8.1px;line-height:8.1px;color:#111;white-space:nowrap;-webkit-text-stroke:0.05px #111;transform:scaleY(1.12);transform-origin:0 6.86px;">71 ft</div><svg style="position:absolute;left:9.20px;top:32.26px" width="8" height="8" viewBox="0 0 8 8"><circle cx="4" cy="4" r="3.9" fill="#2c62b8"/><path d="M1.8 3.6 C2.6 6 5.4 6 6.2 3.6" fill="none" stroke="#fff" stroke-width="0.9"/><path d="M5.3 4.6 L6.3 3.6" stroke="#d06060" stroke-width="0.7"/></svg><div style="position:absolute;left:0;top:41.49px;width:598px;height:11.5px;background:#f3f3f3;"></div><div style="position:absolute;left:28.20px;top:44.93px;font-size:8.1px;line-height:8.1px;color:#111;white-space:nowrap;-webkit-text-stroke:0.05px #111;transform:scaleY(1.12);transform-origin:0 6.86px;">120</div><div style="position:absolute;left:90.30px;top:44.93px;font-size:8.1px;line-height:8.1px;color:#111;white-space:nowrap;-webkit-text-stroke:0.05px #111;transform:scaleY(1.12);transform-origin:0 6.86px;">Oct 18, 2010</div><div style="position:absolute;left:183.00px;top:44.93px;font-size:8.1px;line-height:8.1px;color:#111;white-space:nowrap;-webkit-text-stroke:0.05px #111;transform:scaleY(1.12);transform-origin:0 6.86px;">2:38 PM</div><div style="position:absolute;left:259.90px;top:44.93px;font-size:8.1px;line-height:8.1px;color:#111;white-space:nowrap;-webkit-text-stroke:0.05px #111;transform:scaleY(1.12);transform-origin:0 6.86px;">Batfish Wall</div><div style="position:absolute;left:463.40px;top:44.93px;font-size:8.1px;line-height:8.1px;color:#111;white-space:nowrap;-webkit-text-stroke:0.05px #111;transform:scaleY(1.12);transform-origin:0 6.86px;">71 mins</div><div style="position:absolute;left:541.20px;top:44.93px;font-size:8.1px;line-height:8.1px;color:#111;white-space:nowrap;-webkit-text-stroke:0.05px #111;transform:scaleY(1.12);transform-origin:0 6.86px;">59 ft</div><svg style="position:absolute;left:9.20px;top:43.69px" width="8" height="8" viewBox="0 0 8 8"><circle cx="4" cy="4" r="3.9" fill="#2c62b8"/><path d="M1.8 3.6 C2.6 6 5.4 6 6.2 3.6" fill="none" stroke="#fff" stroke-width="0.9"/><path d="M5.3 4.6 L6.3 3.6" stroke="#d06060" stroke-width="0.7"/></svg><div style="position:absolute;left:0;top:52.92px;width:598px;height:11.5px;background:#fff;"></div><div style="position:absolute;left:28.20px;top:56.36px;font-size:8.1px;line-height:8.1px;color:#111;white-space:nowrap;-webkit-text-stroke:0.05px #111;transform:scaleY(1.12);transform-origin:0 6.86px;">121</div><div style="position:absolute;left:90.30px;top:56.36px;font-size:8.1px;line-height:8.1px;color:#111;white-space:nowrap;-webkit-text-stroke:0.05px #111;transform:scaleY(1.12);transform-origin:0 6.86px;">Oct 19, 2010</div><div style="position:absolute;left:183.00px;top:56.36px;font-size:8.1px;line-height:8.1px;color:#111;white-space:nowrap;-webkit-text-stroke:0.05px #111;transform:scaleY(1.12);transform-origin:0 6.86px;">8:02 AM</div><div style="position:absolute;left:259.90px;top:56.36px;font-size:8.1px;line-height:8.1px;color:#111;white-space:nowrap;-webkit-text-stroke:0.05px #111;transform:scaleY(1.12);transform-origin:0 6.86px;">Starship</div><div style="position:absolute;left:463.40px;top:56.36px;font-size:8.1px;line-height:8.1px;color:#111;white-space:nowrap;-webkit-text-stroke:0.05px #111;transform:scaleY(1.12);transform-origin:0 6.86px;">72 mins</div><div style="position:absolute;left:541.20px;top:56.36px;font-size:8.1px;line-height:8.1px;color:#111;white-space:nowrap;-webkit-text-stroke:0.05px #111;transform:scaleY(1.12);transform-origin:0 6.86px;">63 ft</div><svg style="position:absolute;left:9.20px;top:55.12px" width="8" height="8" viewBox="0 0 8 8"><circle cx="4" cy="4" r="3.9" fill="#2c62b8"/><path d="M1.8 3.6 C2.6 6 5.4 6 6.2 3.6" fill="none" stroke="#fff" stroke-width="0.9"/><path d="M5.3 4.6 L6.3 3.6" stroke="#d06060" stroke-width="0.7"/></svg><div style="position:absolute;left:0;top:64.35px;width:598px;height:11.5px;background:#1b62d4;"></div><div style="position:absolute;left:28.20px;top:67.79px;font-size:8.1px;line-height:8.1px;color:#fff;white-space:nowrap;-webkit-text-stroke:0.05px #fff;transform:scaleY(1.12);transform-origin:0 6.86px;">122</div><div style="position:absolute;left:90.30px;top:67.79px;font-size:8.1px;line-height:8.1px;color:#fff;white-space:nowrap;-webkit-text-stroke:0.05px #fff;transform:scaleY(1.12);transform-origin:0 6.86px;">Oct 19, 2010</div><div style="position:absolute;left:183.00px;top:67.79px;font-size:8.1px;line-height:8.1px;color:#fff;white-space:nowrap;-webkit-text-stroke:0.05px #fff;transform:scaleY(1.12);transform-origin:0 6.86px;">10:28 AM</div><div style="position:absolute;left:259.90px;top:67.79px;font-size:8.1px;line-height:8.1px;color:#fff;white-space:nowrap;-webkit-text-stroke:0.05px #fff;transform:scaleY(1.12);transform-origin:0 6.86px;">Roma</div><div style="position:absolute;left:463.40px;top:67.79px;font-size:8.1px;line-height:8.1px;color:#fff;white-space:nowrap;-webkit-text-stroke:0.05px #fff;transform:scaleY(1.12);transform-origin:0 6.86px;">71 mins</div><div style="position:absolute;left:541.20px;top:67.79px;font-size:8.1px;line-height:8.1px;color:#fff;white-space:nowrap;-webkit-text-stroke:0.05px #fff;transform:scaleY(1.12);transform-origin:0 6.86px;">59 ft</div><svg style="position:absolute;left:9.20px;top:66.55px" width="8" height="8" viewBox="0 0 8 8"><circle cx="4" cy="4" r="3.9" fill="#9aa7bd"/><path d="M1.8 3.6 C2.6 6 5.4 6 6.2 3.6" fill="none" stroke="#fff" stroke-width="0.9"/><path d="M5.3 4.6 L6.3 3.6" stroke="#d06060" stroke-width="0.7"/></svg><div style="position:absolute;left:0;top:75.78px;width:598px;height:11.5px;background:#fff;"></div><div style="position:absolute;left:28.20px;top:79.22px;font-size:8.1px;line-height:8.1px;color:#111;white-space:nowrap;-webkit-text-stroke:0.05px #111;transform:scaleY(1.12);transform-origin:0 6.86px;">123</div><div style="position:absolute;left:90.30px;top:79.22px;font-size:8.1px;line-height:8.1px;color:#111;white-space:nowrap;-webkit-text-stroke:0.05px #111;transform:scaleY(1.12);transform-origin:0 6.86px;">Oct 19, 2010</div><div style="position:absolute;left:183.00px;top:79.22px;font-size:8.1px;line-height:8.1px;color:#111;white-space:nowrap;-webkit-text-stroke:0.05px #111;transform:scaleY(1.12);transform-origin:0 6.86px;">5:54 PM</div><div style="position:absolute;left:259.90px;top:79.22px;font-size:8.1px;line-height:8.1px;color:#111;white-space:nowrap;-webkit-text-stroke:0.05px #111;transform:scaleY(1.12);transform-origin:0 6.86px;">Teluk Waitii</div><div style="position:absolute;left:463.40px;top:79.22px;font-size:8.1px;line-height:8.1px;color:#111;white-space:nowrap;-webkit-text-stroke:0.05px #111;transform:scaleY(1.12);transform-origin:0 6.86px;">72 mins</div><div style="position:absolute;left:541.20px;top:79.22px;font-size:8.1px;line-height:8.1px;color:#111;white-space:nowrap;-webkit-text-stroke:0.05px #111;transform:scaleY(1.12);transform-origin:0 6.86px;">63 ft</div><svg style="position:absolute;left:9.20px;top:77.98px" width="8" height="8" viewBox="0 0 8 8"><circle cx="4" cy="4" r="3.9" fill="#2c62b8"/><path d="M1.8 3.6 C2.6 6 5.4 6 6.2 3.6" fill="none" stroke="#fff" stroke-width="0.9"/><path d="M5.3 4.6 L6.3 3.6" stroke="#d06060" stroke-width="0.7"/></svg><div style="position:absolute;left:0;top:87.21px;width:598px;height:11.5px;background:#f3f3f3;"></div><div style="position:absolute;left:28.20px;top:90.65px;font-size:8.1px;line-height:8.1px;color:#111;white-space:nowrap;-webkit-text-stroke:0.05px #111;transform:scaleY(1.12);transform-origin:0 6.86px;">124</div><div style="position:absolute;left:90.30px;top:90.65px;font-size:8.1px;line-height:8.1px;color:#111;white-space:nowrap;-webkit-text-stroke:0.05px #111;transform:scaleY(1.12);transform-origin:0 6.86px;">Oct 20, 2010</div><div style="position:absolute;left:183.00px;top:90.65px;font-size:8.1px;line-height:8.1px;color:#111;white-space:nowrap;-webkit-text-stroke:0.05px #111;transform:scaleY(1.12);transform-origin:0 6.86px;">7:53 AM</div><div style="position:absolute;left:259.90px;top:90.65px;font-size:8.1px;line-height:8.1px;color:#111;white-space:nowrap;-webkit-text-stroke:0.05px #111;transform:scaleY(1.12);transform-origin:0 6.86px;">Table Coral City</div><div style="position:absolute;left:463.40px;top:90.65px;font-size:8.1px;line-height:8.1px;color:#111;white-space:nowrap;-webkit-text-stroke:0.05px #111;transform:scaleY(1.12);transform-origin:0 6.86px;">78 mins</div><div style="position:absolute;left:541.20px;top:90.65px;font-size:8.1px;line-height:8.1px;color:#111;white-space:nowrap;-webkit-text-stroke:0.05px #111;transform:scaleY(1.12);transform-origin:0 6.86px;">71 ft</div><svg style="position:absolute;left:9.20px;top:89.41px" width="8" height="8" viewBox="0 0 8 8"><circle cx="4" cy="4" r="3.9" fill="#2c62b8"/><path d="M1.8 3.6 C2.6 6 5.4 6 6.2 3.6" fill="none" stroke="#fff" stroke-width="0.9"/><path d="M5.3 4.6 L6.3 3.6" stroke="#d06060" stroke-width="0.7"/></svg><div style="position:absolute;left:0;top:98.64px;width:598px;height:11.5px;background:#fff;"></div><div style="position:absolute;left:28.20px;top:102.08px;font-size:8.1px;line-height:8.1px;color:#111;white-space:nowrap;-webkit-text-stroke:0.05px #111;transform:scaleY(1.12);transform-origin:0 6.86px;">125</div><div style="position:absolute;left:90.30px;top:102.08px;font-size:8.1px;line-height:8.1px;color:#111;white-space:nowrap;-webkit-text-stroke:0.05px #111;transform:scaleY(1.12);transform-origin:0 6.86px;">Oct 20, 2010</div><div style="position:absolute;left:183.00px;top:102.08px;font-size:8.1px;line-height:8.1px;color:#111;white-space:nowrap;-webkit-text-stroke:0.05px #111;transform:scaleY(1.12);transform-origin:0 6.86px;">10:12 AM</div><div style="position:absolute;left:259.90px;top:102.08px;font-size:8.1px;line-height:8.1px;color:#111;white-space:nowrap;-webkit-text-stroke:0.05px #111;transform:scaleY(1.12);transform-origin:0 6.86px;">Spiral Corner</div><div style="position:absolute;left:463.40px;top:102.08px;font-size:8.1px;line-height:8.1px;color:#111;white-space:nowrap;-webkit-text-stroke:0.05px #111;transform:scaleY(1.12);transform-origin:0 6.86px;">71 mins</div><div style="position:absolute;left:541.20px;top:102.08px;font-size:8.1px;line-height:8.1px;color:#111;white-space:nowrap;-webkit-text-stroke:0.05px #111;transform:scaleY(1.12);transform-origin:0 6.86px;">45 ft</div><svg style="position:absolute;left:9.20px;top:100.84px" width="8" height="8" viewBox="0 0 8 8"><circle cx="4" cy="4" r="3.9" fill="#2c62b8"/><path d="M1.8 3.6 C2.6 6 5.4 6 6.2 3.6" fill="none" stroke="#fff" stroke-width="0.9"/><path d="M5.3 4.6 L6.3 3.6" stroke="#d06060" stroke-width="0.7"/></svg><div style="position:absolute;left:0;top:110.07px;width:598px;height:11.5px;background:#f3f3f3;"></div><div style="position:absolute;left:28.20px;top:113.51px;font-size:8.1px;line-height:8.1px;color:#111;white-space:nowrap;-webkit-text-stroke:0.05px #111;transform:scaleY(1.12);transform-origin:0 6.86px;">126</div><div style="position:absolute;left:90.30px;top:113.51px;font-size:8.1px;line-height:8.1px;color:#111;white-space:nowrap;-webkit-text-stroke:0.05px #111;transform:scaleY(1.12);transform-origin:0 6.86px;">Oct 20, 2010</div><div style="position:absolute;left:183.00px;top:113.51px;font-size:8.1px;line-height:8.1px;color:#111;white-space:nowrap;-webkit-text-stroke:0.05px #111;transform:scaleY(1.12);transform-origin:0 6.86px;">2:40 PM</div><div style="position:absolute;left:259.90px;top:113.51px;font-size:8.1px;line-height:8.1px;color:#111;white-space:nowrap;-webkit-text-stroke:0.05px #111;transform:scaleY(1.12);transform-origin:0 6.86px;">Canobite</div><div style="position:absolute;left:463.40px;top:113.51px;font-size:8.1px;line-height:8.1px;color:#111;white-space:nowrap;-webkit-text-stroke:0.05px #111;transform:scaleY(1.12);transform-origin:0 6.86px;">70 mins</div><div style="position:absolute;left:541.20px;top:113.51px;font-size:8.1px;line-height:8.1px;color:#111;white-space:nowrap;-webkit-text-stroke:0.05px #111;transform:scaleY(1.12);transform-origin:0 6.86px;">70 ft</div><svg style="position:absolute;left:9.20px;top:112.27px" width="8" height="8" viewBox="0 0 8 8"><circle cx="4" cy="4" r="3.9" fill="#2c62b8"/><path d="M1.8 3.6 C2.6 6 5.4 6 6.2 3.6" fill="none" stroke="#fff" stroke-width="0.9"/><path d="M5.3 4.6 L6.3 3.6" stroke="#d06060" stroke-width="0.7"/></svg><div style="position:absolute;left:0;top:9.5px;width:598px;height:0px;"></div></div><div style="position:absolute;left:121.00px;top:306.00px;width:598.00px;height:9.80px;background:#fff;"></div><div style="position:absolute;left:121.00px;top:315.60px;width:598.00px;height:0.70px;background:#e3e3e3;"></div><div style="position:absolute;left:146.30px;top:307.00px;width:0.60px;height:7.50px;background:#e0e0e0;"></div><div style="position:absolute;left:208.30px;top:307.00px;width:0.60px;height:7.50px;background:#e0e0e0;"></div><div style="position:absolute;left:301.50px;top:307.00px;width:0.60px;height:7.50px;background:#e0e0e0;"></div><div style="position:absolute;left:378.60px;top:307.00px;width:0.60px;height:7.50px;background:#e0e0e0;"></div><div style="position:absolute;left:581.60px;top:307.00px;width:0.60px;height:7.50px;background:#e0e0e0;"></div><div style="position:absolute;left:659.30px;top:307.00px;width:0.60px;height:7.50px;background:#e0e0e0;"></div><div style="position:absolute;left:149.20px;top:308.32px;font-size:7px;line-height:7px;color:#2b2b2b;white-space:nowrap;transform:scale(1.0,1.12);transform-origin:0 5.93px;">Dive#</div><div style="position:absolute;left:211.30px;top:308.32px;font-size:7px;line-height:7px;color:#2b2b2b;white-space:nowrap;transform:scale(1.0,1.12);transform-origin:0 5.93px;">Date</div><div style="position:absolute;left:304.00px;top:308.32px;font-size:7px;line-height:7px;color:#2b2b2b;white-space:nowrap;transform:scale(1.0,1.12);transform-origin:0 5.93px;">Time</div><div style="position:absolute;left:380.90px;top:308.32px;font-size:7px;line-height:7px;color:#2b2b2b;white-space:nowrap;transform:scale(1.0,1.12);transform-origin:0 5.93px;">Site</div><div style="position:absolute;left:584.40px;top:308.32px;font-size:7px;line-height:7px;color:#2b2b2b;white-space:nowrap;transform:scale(1.0,1.12);transform-origin:0 5.93px;">Length</div><div style="position:absolute;left:662.20px;top:308.32px;font-size:7px;line-height:7px;color:#2b2b2b;white-space:nowrap;transform:scale(1.0,1.12);transform-origin:0 5.93px;">MaxDepth</div><div style="position:absolute;left:119.30px;top:305.00px;width:600.70px;height:118.40px;border:1.7px solid #7cb0f3;border-right:none;"></div><div style="position:absolute;left:1.00px;top:423.40px;width:719.00px;height:11.60px;background:#e1e1e1;"></div><div style="position:absolute;left:119.30px;top:423.40px;width:600.70px;height:1.40px;background:#ece9e6;"></div><div style="position:absolute;left:2.00px;top:421.20px;width:117.30px;height:13.80px;background:#e1e1e1;border-top:1px solid #d9d9d9;"></div><div style="position:absolute;left:718.60px;top:306.50px;width:1.40px;height:116.50px;background:#e4e4e4;"></div></body></html>
